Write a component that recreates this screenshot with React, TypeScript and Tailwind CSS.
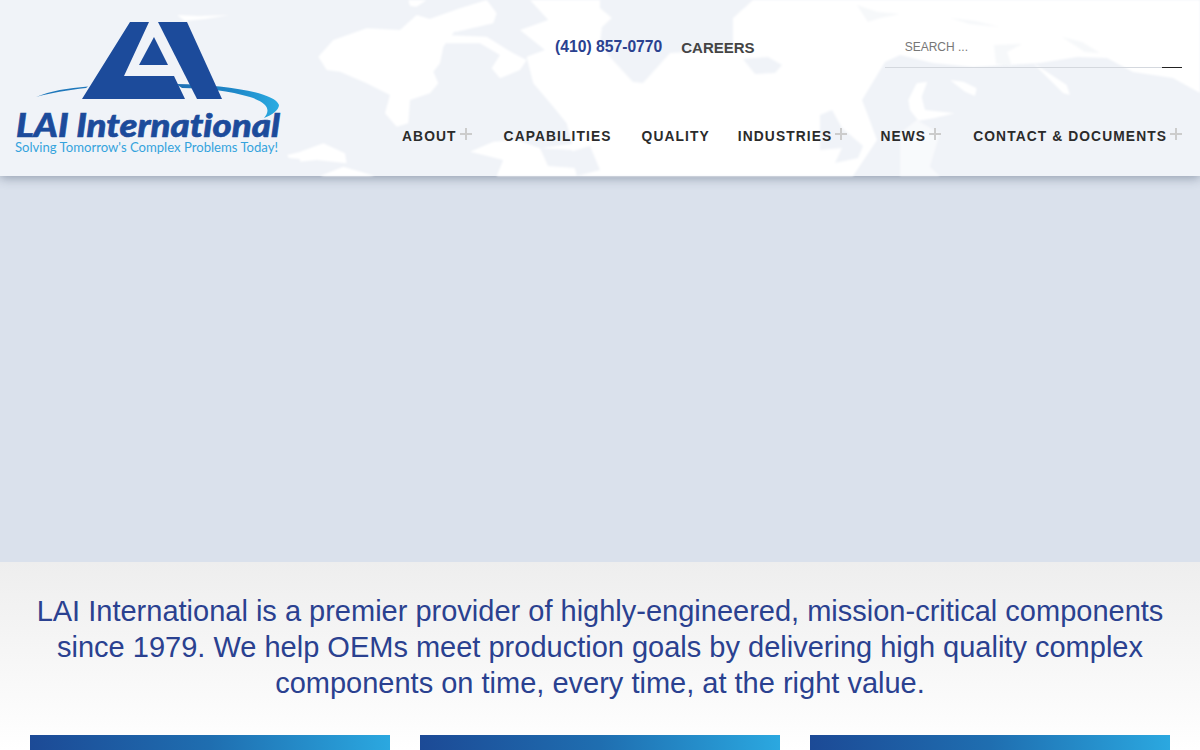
const navItems = [
  { label: "ABOUT", hasMenu: true, className: "mr-[32px]" },
  { label: "CAPABILITIES", hasMenu: false, className: "mr-[30px]" },
  { label: "QUALITY", hasMenu: false, className: "mr-[28px]" },
  { label: "INDUSTRIES", hasMenu: true, className: "mr-[33px]" },
  { label: "NEWS", hasMenu: true, className: "mr-[32px]" },
  { label: "CONTACT & DOCUMENTS", hasMenu: true, className: "" },
];

// coordinates below are in 3x crop space, one group per 300px slice of the map
const WorldMap = () => (
  <svg className="absolute inset-0 h-full w-full blur-[1px]" viewBox="0 0 1200 176" fill="#ffffff">
    <path d="M177 15l22 1 31-1-25 4-20 2zM287 155l13-3v7l-11-1z" />
    <g transform="translate(300 0) scale(0.3333)">
      <path d="M55 170L100 120L200 85L300 90L350 45L400 60L470 85L430 140L420 190L400 215L415 250L390 280L330 300L325 370L290 380L255 340L270 285L200 250L120 215L80 210Z" />
      <path d="M380 60L480 25L560 0L590 40L580 70L470 95L400 90Z" />
      <path d="M325 0H380L350 20L330 18Z" />
      <path d="M430 105L560 110L640 160L680 180L660 210L600 235L575 205L600 165L540 130L440 130Z" />
      <path d="M660 90L700 85L750 130L720 120Z" />
      <path d="M0 455L70 430L135 460L140 490L50 480L0 485Z" />
      <path d="M60 528L130 500L225 528Z" />
      <path d="M510 455L580 425L650 420L720 445L830 430L840 528H590L610 480Z" />
      <path d="M690 0H900V528H830L820 440L800 370L760 320L700 250L680 170L735 150L660 90L745 60Z" />
    </g>
    <path d="M580 0H900L1200 0V93L1173 78L1133 72L1107 58L1077 57L1040 63L973 67L933 63L900 55L885 62L862 100L867 113L877 140L853 176H580Z" />
    <g fill="#f0f3f8">
      <path d="M715 0H753L733 18L733 50L670 53L643 83L633 82L610 57L600 43L602 27L612 18L600 8L600 0Z" />
      <path d="M743 59L768 57L782 65L775 73L755 74Z" />
      <path d="M820 115L832 110L842 128L863 146L858 158L835 163L842 148L820 150Z" />
      <path d="M570 152L590 146L600 170L577 176Z" />
      <path d="M540 148L572 150L575 168L548 166Z" />
    </g>
    <g fill="#f6f8fa">
      <path d="M857 5L878 12L900 14L880 18L868 22Z" />
      <path d="M950 18L975 21L1000 27L970 24Z" />
      <path d="M994 45L1022 44L1007 52L1012 66L996 64Z" />
      <path d="M1062 37L1082 42L1100 53L1085 52Z" />
    </g>
    <g transform="translate(900 0) scale(0.3333)">
      <path d="M25 300L50 250L82 245L65 290L75 330L165 340L100 355L55 362L30 330Z" />
      <path d="M150 240L190 245L230 265L225 288L195 275Z" />
      <path d="M400 190L440 215L500 255L510 285L490 280L450 240Z" />
      <path d="M850 225L900 240V275Z" />
      <path d="M0 528V400L50 360L120 400L90 500L120 528Z" opacity="0.55" />
    </g>
  </svg>
);

const Logo = () => (
  <svg width="300" height="176" viewBox="0 0 300 176" className="shrink-0">
    <defs>
      <linearGradient id="swoosh" x1="0" x2="1" y1="0" y2="0">
        <stop offset="0" stopColor="#1c6fb4" />
        <stop offset="0.6" stopColor="#1f8aca" />
        <stop offset="1" stopColor="#2bace2" />
      </linearGradient>
    </defs>
    <path d="M36 97C50 91 68 88 88 86.5L86 88C68 90 50 93 36 97Z" fill="#1f78bb" />
    <path d="M176 84C225 85 274 92 279 105C279 110 272 115 264 118C271 110 268 103 250 97C230 91 205 88 182 88Z" fill="url(#swoosh)" />
    <path d="M130 22H149L124 76H174L185 99H82Z" fill="#1c4b9b" />
    <path d="M158 22H187L222 99H197Z" fill="#1c4b9b" />
    <path d="M154 37L168 65H139Z" fill="#1c4b9b" />
    <text
      x="16"
      y="137"
      textLength="264"
      lengthAdjust="spacingAndGlyphs"
      stroke="#1c4b9b"
      strokeWidth="0.6"
      className="font-['Lato'] text-[33px] font-black italic [font-variant-ligatures:none]"
      fill="#1c4b9b"
    >
      LAI International
    </text>
    <text
      x="15"
      y="152"
      textLength="263"
      lengthAdjust="spacingAndGlyphs"
      className="font-['Lato'] text-[14px] [font-variant-ligatures:none]"
      fill="#35a3dd"
    >
      Solving Tomorrow's Complex Problems Today!
    </text>
  </svg>
);

const Header = () => (
  <header className="relative z-10 flex h-[176px] bg-[#f0f3f8] shadow-[0_2px_10px_rgba(60,75,100,0.45)]">
    <WorldMap />
    <div className="relative flex w-full">
      <Logo />
      <div className="flex flex-1 flex-col pr-[18px]">
        <div className="flex h-[68px] items-start whitespace-nowrap">
          <a className="ml-[255px] mt-[38px] text-[15.7px] font-bold leading-[18px] text-[#2a4190]">(410) 857-0770</a>
          <a className="ml-[19px] mt-[39px] text-[15px] font-bold leading-[17px] text-[#444444]">CAREERS</a>
          <div className="ml-[130px] flex h-[68px] w-[297px] items-end border-b border-[#d4d8de]">
            <span className="mb-[13px] ml-[20px] flex-1 text-[12px] leading-[14px] text-[#777777]">SEARCH ...</span>
            <span className="mb-[-1px] h-px w-[20px] bg-[#222222]" />
          </div>
        </div>
        <nav className="ml-[102px] mt-[59px] flex items-start whitespace-nowrap">
          {navItems.map((item) => (
            <div key={item.label} className={`flex items-start ${item.className}`}>
              <a className="mt-[1px] text-[13.8px] font-bold leading-[18px] tracking-[1.1px] text-[#2b2b2b]">{item.label}</a>
              {item.hasMenu && (
                <svg width="12" height="12" viewBox="0 0 12 12" className="ml-[3px] mt-[1px]" fill="#cccccc">
                  <path d="M5 0h2v5h5v2H7v5H5V7H0V5h5z" />
                </svg>
              )}
            </div>
          ))}
        </nav>
      </div>
    </div>
  </header>
);

export default function App() {
  return (
    <div className="h-[750px] overflow-hidden bg-white font-['Liberation_Sans',Arial,sans-serif]">
      <Header />
      <div className="h-[386px] bg-[#dae1ec]" />
      <section className="h-[188px] bg-gradient-to-b from-[#eeeeee] to-white px-[30px] pt-[31px]">
        <p className="text-center text-[29px] leading-[36px] text-[#2a4190]">
          LAI International is a premier provider of highly-engineered, mission-critical components
          <br />
          since 1979. We help OEMs meet production goals by delivering high quality complex
          <br />
          components on time, every time, at the right value.
        </p>
        <div className="mt-[34px] grid grid-cols-3 gap-[30px]">
          <div className="h-[60px] bg-gradient-to-r from-[#1c4a96] via-[#1f6eb0] to-[#2ba8e0]" />
          <div className="h-[60px] bg-gradient-to-r from-[#1c4a96] via-[#1f6eb0] to-[#2ba8e0]" />
          <div className="h-[60px] bg-gradient-to-r from-[#1c4a96] via-[#1f6eb0] to-[#2ba8e0]" />
        </div>
      </section>
    </div>
  );
}
